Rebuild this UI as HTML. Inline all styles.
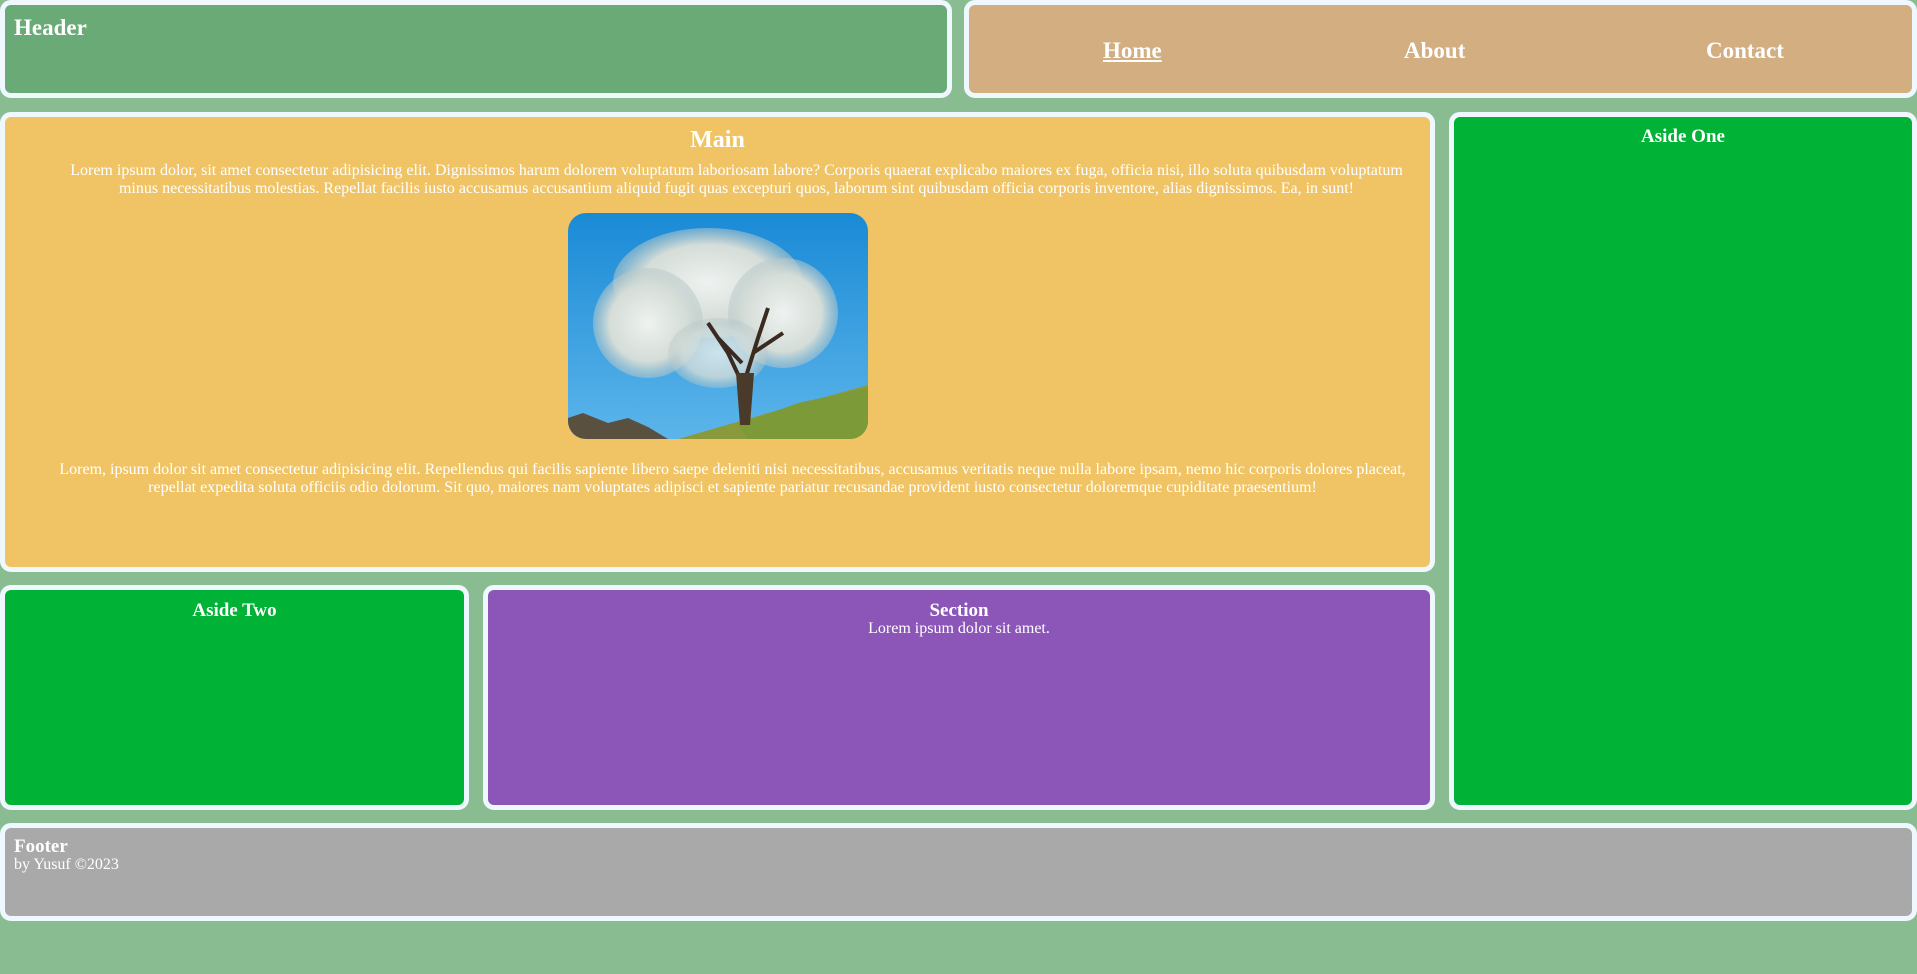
<!DOCTYPE html>
<html><head><meta charset="utf-8"><style>
html,body{margin:0;padding:0;width:1917px;height:974px;overflow:hidden;background:#8abc91;font-family:"Liberation Serif",serif;color:#fff}
.b{position:absolute;box-sizing:border-box;border:5px solid #f0f8ff;border-radius:11px}
p{margin:0}
</style></head><body>
<div class="b" style="left:0;top:0;width:952px;height:98px;background:#6aaa76">
 <div style="position:absolute;left:9px;top:10px;font-size:23px;font-weight:bold">Header</div>
</div>
<div class="b" style="left:964px;top:0;width:953px;height:98px;background:#d2ae80;font-size:23px;font-weight:bold">
 <span style="position:absolute;left:134px;top:33px;text-decoration:underline">Home</span>
 <span style="position:absolute;left:435px;top:33px">About</span>
 <span style="position:absolute;left:737px;top:33px">Contact</span>
</div>
<div class="b" style="left:0;top:112px;width:1435px;height:460px;background:#f0c465;text-align:center">
 <div style="position:absolute;left:0;right:0;top:10px;font-size:24px;font-weight:bold">Main</div>
 <p style="position:absolute;left:62px;right:24px;top:45px;font-size:16px;line-height:18px">Lorem ipsum dolor, sit amet consectetur adipisicing elit. Dignissimos harum dolorem voluptatum laboriosam labore? Corporis quaerat explicabo maiores ex fuga, officia nisi, illo soluta quibusdam voluptatum minus necessitatibus molestias. Repellat facilis iusto accusamus accusantium aliquid fugit quas excepturi quos, laborum sint quibusdam officia corporis inventore, alias dignissimos. Ea, in sunt!</p>
 <svg style="position:absolute;left:563px;top:96px" width="300" height="226" viewBox="0 0 300 226">
  <defs><clipPath id="c"><rect width="300" height="226" rx="18"/></clipPath>
  <linearGradient id="s" x1="0" y1="0" x2="0" y2="1"><stop offset="0" stop-color="#1a8ad6"/><stop offset="1" stop-color="#5cb5ea"/></linearGradient>
  <radialGradient id="f" cx=".5" cy=".5" r=".5"><stop offset="0" stop-color="#eef2f0"/><stop offset=".7" stop-color="#d5ddd8"/><stop offset="1" stop-color="#b8c8c8" stop-opacity=".5"/></radialGradient></defs>
  <g clip-path="url(#c)">
   <rect width="300" height="226" fill="url(#s)"/>
   <path d="M0 205 L15 200 L40 210 L60 205 L80 214 L100 226 L0 226Z" fill="#5a5040"/>
   <path d="M110 226 L200 200 L300 172 L300 226Z" fill="#8a9a3a"/>
   <path d="M170 212 L230 190 L300 175 L300 226 L180 226Z" fill="#7d9a38"/>
   <ellipse cx="140" cy="70" rx="95" ry="55" fill="url(#f)"/>
   <ellipse cx="80" cy="110" rx="55" ry="55" fill="url(#f)"/>
   <ellipse cx="215" cy="100" rx="55" ry="55" fill="url(#f)"/>
   <ellipse cx="150" cy="140" rx="50" ry="35" fill="url(#f)" opacity=".8"/>
   <path d="M178 210 L174 170 L160 140 L140 110 M176 170 L190 125 L200 95 M185 140 L215 120 M174 150 L150 125" stroke="#3a2a20" stroke-width="4" fill="none"/>
   <path d="M172 212 L168 160 L186 160 L182 212Z" fill="#4a3a2a"/>
  </g>
 </svg>
 <p style="position:absolute;left:50px;right:20px;top:344px;font-size:16px;line-height:18px">Lorem, ipsum dolor sit amet consectetur adipisicing elit. Repellendus qui facilis sapiente libero saepe deleniti nisi necessitatibus, accusamus veritatis neque nulla labore ipsam, nemo hic corporis dolores placeat, repellat expedita soluta officiis odio dolorum. Sit quo, maiores nam voluptates adipisci et sapiente pariatur recusandae provident iusto consectetur doloremque cupiditate praesentium!</p>
</div>
<div class="b" style="left:1449px;top:112px;width:468px;height:698px;background:#00b236;text-align:center">
 <div style="position:absolute;left:0;right:0;top:9px;font-size:19px;font-weight:bold">Aside One</div>
</div>
<div class="b" style="left:0;top:585px;width:469px;height:225px;background:#00b236;text-align:center">
 <div style="position:absolute;left:0;right:0;top:10px;font-size:19px;font-weight:bold">Aside Two</div>
</div>
<div class="b" style="left:483px;top:585px;width:952px;height:225px;background:#8c56b8;text-align:center">
 <div style="position:absolute;left:0;right:0;top:10px;font-size:19px;font-weight:bold">Section</div>
 <div style="position:absolute;left:0;right:0;top:30px;font-size:16px">Lorem ipsum dolor sit amet.</div>
</div>
<div class="b" style="left:0;top:823px;width:1917px;height:98px;background:#a9a9a9">
 <div style="position:absolute;left:9px;top:8px;font-size:19px;font-weight:bold">Footer</div>
 <div style="position:absolute;left:9px;top:28px;font-size:16px">by Yusuf ©2023</div>
</div>
</body></html>
